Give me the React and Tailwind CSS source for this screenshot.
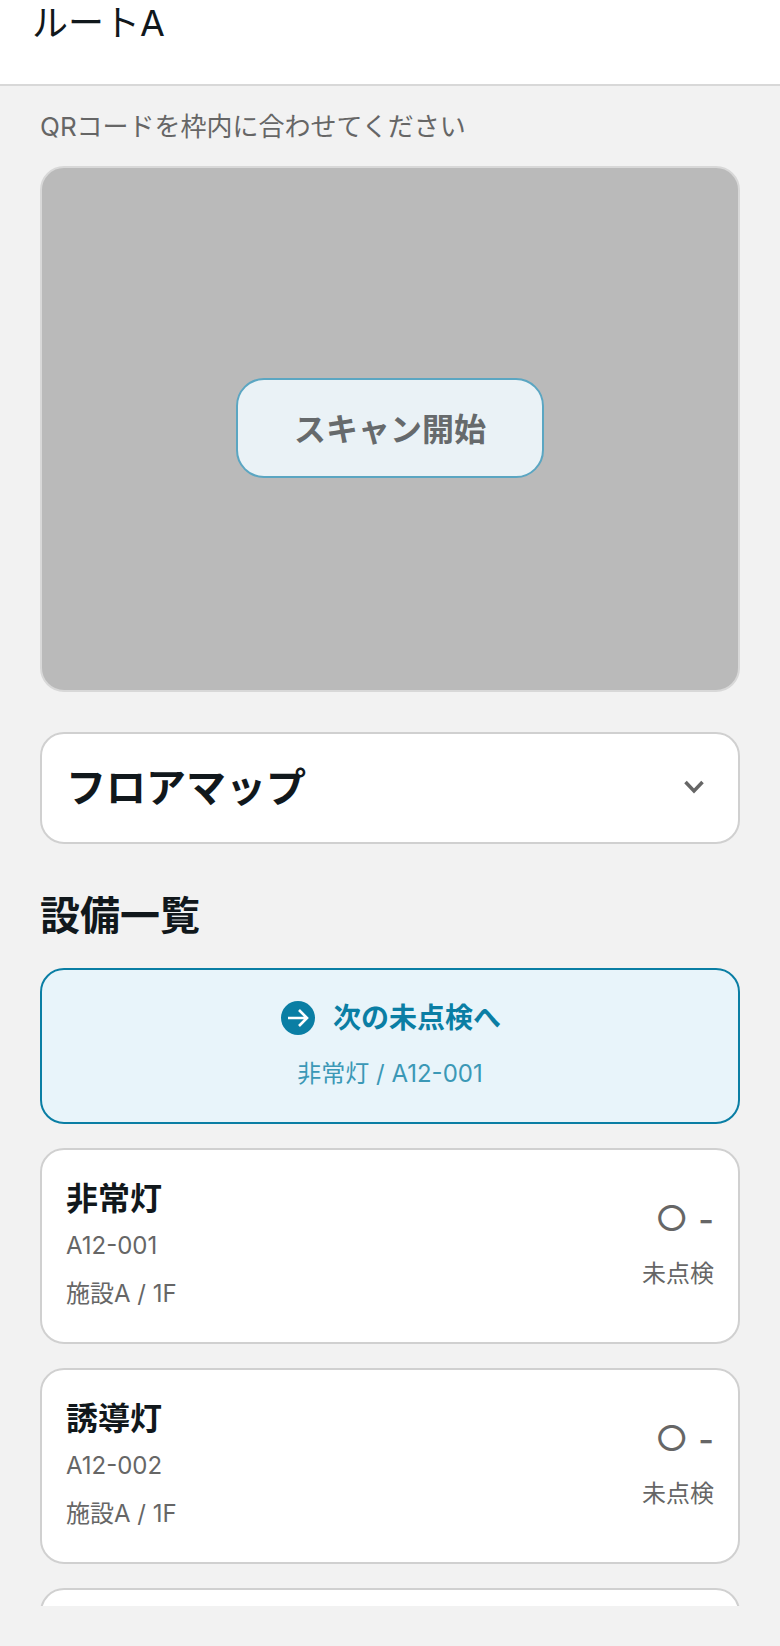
function EquipmentCard({ name, code, place }) {
  return (
    <div className="flex h-[196px] shrink-0 items-center justify-between rounded-[24px] border-2 border-[#d0d0d0] bg-white px-[24px]">
      <div className="flex flex-col">
        <div className="text-[32px] leading-[40px] font-bold text-[#11181c]">{name}</div>
        <div className="mt-[7px] text-[24px] leading-[40px] text-[#666]">{code}</div>
        <div className="mt-[8px] text-[24px] leading-[40px] text-[#666]">{place}</div>
      </div>
      <div className="flex flex-col items-end">
        <div className="flex h-[40px] items-center gap-[10px] text-[#666]">
          <span className="mb-[1px] text-[36px] leading-[40px]">○</span>
          <span className="mt-[2px] text-[34px] leading-[40px] font-medium">-</span>
        </div>
        <div className="mt-[15px] text-[24px] leading-[40px] text-[#666]">未点検</div>
      </div>
    </div>
  );
}

export default function App() {
  return (
    <div className="min-h-[1646px] bg-[#f2f2f2] font-['Inter','Noto_Sans_CJK_JP',sans-serif]">
      <header className="h-[86px] border-b-2 border-[#d8d8d8] bg-white px-[32px] pt-[3px]">
        <h1 className="text-[36px] leading-[40px] text-[#11181c]">ルートA</h1>
      </header>

      <main className="flex h-[1520px] flex-col overflow-hidden px-[40px]">
        <p className="mt-[23px] text-[26px] leading-[36px] text-[#666]">QRコードを枠内に合わせてください</p>

        <div className="mt-[21px] flex h-[526px] shrink-0 items-center justify-center rounded-[24px] border-2 border-[#d8d8d8] bg-[#bababa]">
          <button className="mb-[2px] h-[100px] w-[308px] rounded-[28px] border-2 border-[#5ba6c2] bg-[#eaf2f6] pt-[3px] text-[32px] font-bold text-[#666a6c]">
            スキャン開始
          </button>
        </div>

        <div className="mt-[40px] flex h-[112px] shrink-0 items-center justify-between rounded-[24px] border-2 border-[#d0d0d0] bg-white pr-[32px] pl-[24px]">
          <span className="text-[40px] font-bold text-[#11181c]">フロアマップ</span>
          <svg className="mb-[2px]" width="24" height="24" viewBox="0 0 24 24" fill="none" stroke="#666" strokeWidth="3.5">
            <path d="M3.5 7L12 16L20.5 7" />
          </svg>
        </div>

        <h2 className="mt-[42px] text-[40px] leading-[60px] font-bold text-[#11181c]">設備一覧</h2>

        <div className="mt-[22px] flex h-[156px] shrink-0 flex-col items-center justify-center rounded-[24px] border-2 border-[#0a7ea4] bg-[#e8f4fa]">
          <div className="flex items-center gap-[18px] pl-[2px]">
            <svg width="34" height="34" viewBox="0 0 34 34">
              <circle cx="17" cy="17" r="17" fill="#0a7ea4" />
              <path d="M7 17H26M18 9L26 17L18 25" fill="none" stroke="#fff" strokeWidth="2.6" />
            </svg>
            <span className="text-[28px] leading-[40px] font-bold text-[#0a7ea4]">次の未点検へ</span>
          </div>
          <div className="mt-[16px] text-[24px] leading-[40px] text-[#3b98b6]">非常灯 / A12-001</div>
        </div>

        <div className="mt-[24px] flex flex-col gap-[24px]">
          <EquipmentCard name="非常灯" code="A12-001" place="施設A / 1F" />
          <EquipmentCard name="誘導灯" code="A12-002" place="施設A / 1F" />
          <div className="h-[196px] shrink-0 rounded-[24px] border-2 border-[#d0d0d0] bg-white" />
        </div>
      </main>
    </div>
  );
}
